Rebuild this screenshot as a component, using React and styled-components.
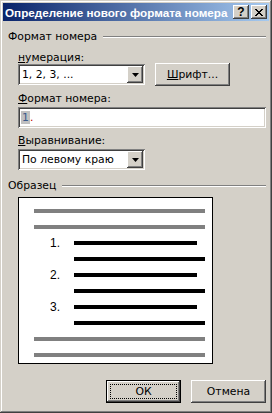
import React from 'react';
import styled, { createGlobalStyle } from 'styled-components';

const Global = createGlobalStyle`
  html, body { margin: 0; padding: 0; background: #d4d0c8; }
  body { font-family: "DejaVu Sans", Verdana, sans-serif; font-size: 10.8px; color: #000; }
`;

const raised = `
  box-shadow: inset -1px -1px #404040, inset 1px 1px #ffffff, inset -2px -2px #808080, inset 2px 2px #d4d0c8;
`;
const sunken = `
  box-shadow: inset 1px 1px #808080, inset -1px -1px #ffffff, inset 2px 2px #404040, inset -2px -2px #d4d0c8;
`;

const Window = styled.div`
  box-sizing: border-box;
  width: 272px;
  height: 413px;
  padding: 3px;
  background: #d4d0c8;
  box-shadow: inset -1px -1px #404040, inset 1px 1px #d4d0c8, inset -2px -2px #808080, inset 2px 2px #ffffff;
  display: flex;
  flex-direction: column;
`;

const TitleBar = styled.div`
  height: 18px;
  display: flex;
  align-items: center;
  padding: 0 2px 0 2px;
  background: linear-gradient(to right, #0a246a, #a6caf0);
`;

const TitleText = styled.div`
  flex: 1;
  color: #fff;
  font-family: "Liberation Sans", Arial, sans-serif;
  font-weight: bold;
  font-size: 11.7px;
  white-space: nowrap;
  overflow: hidden;
`;

const CaptionButton = styled.div`
  box-sizing: border-box;
  width: 16px;
  height: 14px;
  margin-left: ${p => p.$gap}px;
  background: #d4d0c8;
  ${raised}
  display: flex;
  align-items: center;
  justify-content: center;
  font-family: "Liberation Sans", Arial, sans-serif;
  font-weight: bold;
  font-size: 12px;
  line-height: 14px;
`;

const Body = styled.div`
  flex: 1;
  display: flex;
  flex-direction: column;
  padding: 0 3px 0 5px;
`;

const GroupHeader = styled.div`
  display: flex;
  align-items: center;
  height: 13px;
  margin-top: ${p => p.$mt}px;
  gap: 6px;
`;

const GroupLine = styled.div`
  flex: 1;
  height: 0;
  border-top: 1px solid #808080;
  border-bottom: 1px solid #ffffff;
`;

const Label = styled.div`
  margin-left: 10px;
  margin-top: ${p => p.$mt}px;
  line-height: 13px;
  height: 13px;
`;

const U = styled.span`
  text-decoration: underline;
`;

const Row = styled.div`
  display: flex;
  align-items: flex-start;
  margin-left: 10px;
  margin-top: ${p => p.$mt}px;
  gap: 10px;
`;

const Combo = styled.div`
  box-sizing: border-box;
  width: 127px;
  height: 21px;
  margin-top: ${p => p.$mt || 0}px;
  margin-left: ${p => p.$ml || 0}px;
  background: #fff;
  ${sunken}
  padding: 2px;
  display: flex;
  align-items: center;
`;

const ComboText = styled.div`
  flex: 1;
  padding-left: 2px;
  white-space: nowrap;
`;

const DropButton = styled.div`
  box-sizing: border-box;
  width: 16px;
  height: 17px;
  background: #d4d0c8;
  ${raised}
  display: flex;
  align-items: center;
  justify-content: center;
`;

const Button = styled.div`
  box-sizing: border-box;
  width: 75px;
  height: 23px;
  background: #d4d0c8;
  ${raised}
  display: flex;
  align-items: center;
  justify-content: center;
  position: relative;
`;

const DefaultButton = styled(Button)`
  box-shadow: inset 0 0 0 1px #000, inset -2px -2px #404040, inset 2px 2px #ffffff, inset -3px -3px #808080;
`;

const Focus = styled.div`
  position: absolute;
  left: 4px; top: 4px; right: 4px; bottom: 4px;
  border: 1px dotted #000;
`;

const Field = styled.div`
  box-sizing: border-box;
  margin-left: 10px;
  margin-top: ${p => p.$mt}px;
  height: 21px;
  background: #fff;
  ${sunken}
  padding: 2px 3px;
  display: flex;
  align-items: center;
`;

const Placeholder = styled.span`
  background: #c0c0c0;
  color: #3a5a8a;
  padding: 0 1px;
`;

const Dot = styled.span`
  color: #c00000;
`;

const Preview = styled.div`
  box-sizing: border-box;
  margin-left: 10px;
  margin-top: ${p => p.$mt}px;
  width: 195px;
  height: 167px;
  background: #fff;
  border: 1px solid #000;
  padding: 11px 7px 0 15px;
  display: flex;
  flex-direction: column;
  gap: 12px;
`;

const LineRow = styled.div`
  display: flex;
  align-items: center;
  height: 4px;
`;

const Num = styled.div`
  width: 26px;
  text-align: right;
  font-family: "Liberation Sans", Arial, sans-serif;
  font-size: 12px;
  line-height: 4px;
  margin-right: 14px;
`;

const NumSpacer = styled.div`
  width: 40px;
`;

const Bar = styled.div`
  height: 4px;
  background: ${p => p.$color};
  flex: ${p => (p.$short ? '0 0 123px' : '1')};
`;

const Footer = styled.div`
  display: flex;
  justify-content: flex-end;
  gap: 10px;
  margin-top: ${p => p.$mt}px;
`;

const Arrow = () => (
  <svg width="7" height="4" viewBox="0 0 7 4"><polygon points="0,0 7,0 3.5,4" fill="#000" /></svg>
);

const CloseGlyph = () => (
  <svg width="8" height="7" viewBox="0 0 8 7" shapeRendering="crispEdges">
    {[0, 1, 2, 3, 4, 5, 6].map(i => (
      <React.Fragment key={i}>
        <rect x={i} y={i} width="2" height="1" fill="#000" />
        <rect x={6 - i} y={i} width="2" height="1" fill="#000" />
      </React.Fragment>
    ))}
  </svg>
);

export default function App() {
  const numbered = ['1.', '2.', '3.'];
  return (
    <>
      <Global />
      <Window>
        <TitleBar>
          <TitleText>Определение нового формата номера</TitleText>
          <CaptionButton $gap={0}>?</CaptionButton>
          <CaptionButton $gap={2}><CloseGlyph /></CaptionButton>
        </TitleBar>
        <Body>
          <GroupHeader $mt={9}>
            <span>Формат номера</span>
            <GroupLine />
          </GroupHeader>
          <Label $mt={8}><U>н</U>умерация:</Label>
          <Row $mt={-1}>
            <Combo $mt={1}>
              <ComboText>1, 2, 3, ...</ComboText>
              <DropButton><Arrow /></DropButton>
            </Combo>
            <Button><span><U>Ш</U>рифт...</span></Button>
          </Row>
          <Label $mt={6}><U>Ф</U>ормат номера:</Label>
          <Field $mt={2}><Placeholder>1</Placeholder><Dot>.</Dot></Field>
          <Label $mt={6}><U>В</U>ыравнивание:</Label>
          <Combo $mt={2} $ml={10}>
            <ComboText>По левому краю</ComboText>
            <DropButton><Arrow /></DropButton>
          </Combo>
          <GroupHeader $mt={9}>
            <span>Образец</span>
            <GroupLine />
          </GroupHeader>
          <Preview $mt={5}>
            <LineRow><Bar $color="#808080" /></LineRow>
            <LineRow><Bar $color="#808080" /></LineRow>
            {numbered.map(n => (
              <React.Fragment key={n}>
                <LineRow><Num>{n}</Num><Bar $color="#000" $short /></LineRow>
                <LineRow><NumSpacer /><Bar $color="#000" /></LineRow>
              </React.Fragment>
            ))}
            <LineRow><Bar $color="#808080" /></LineRow>
            <LineRow><Bar $color="#808080" /></LineRow>
          </Preview>
          <Footer $mt={16}>
            <DefaultButton><Focus />ОК</DefaultButton>
            <Button>Отмена</Button>
          </Footer>
        </Body>
      </Window>
    </>
  );
}
